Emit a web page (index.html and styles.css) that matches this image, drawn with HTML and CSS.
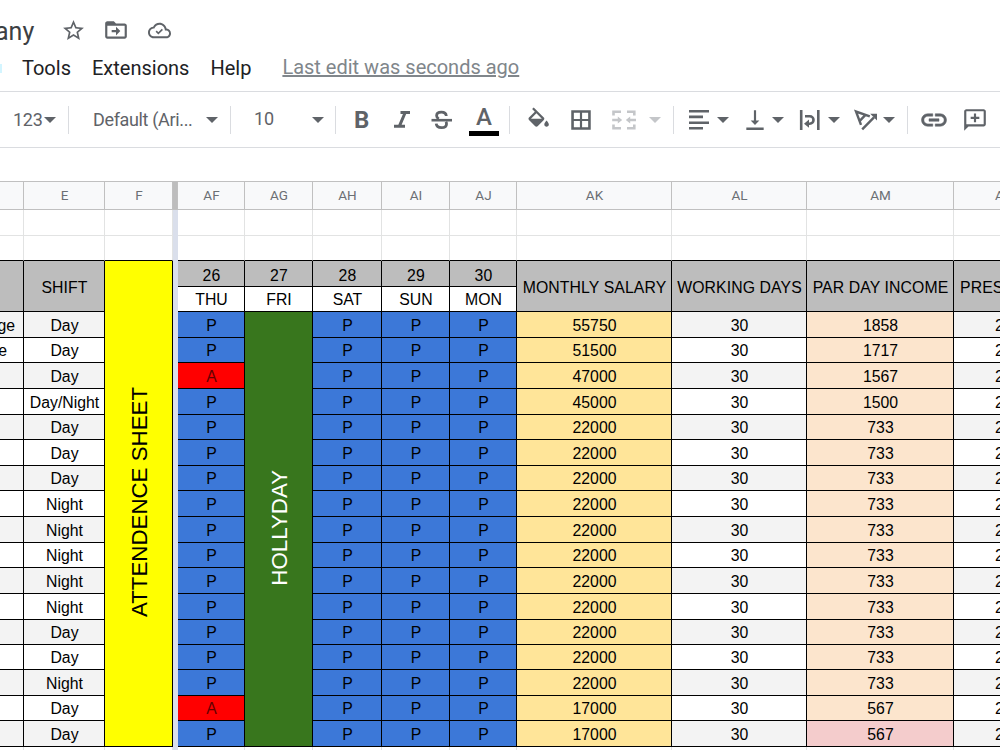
FILE: index.html
```
<!DOCTYPE html>
<html lang="en">
<head>
    <meta charset="UTF-8">
    <meta name="viewport" content="width=device-width, initial-scale=1.0">
    <title>Attendance Sheet</title>
    <link rel="stylesheet" href="styles.css">
</head>
<body>
<header>
    <div class="title-row">
        <span class="doc-title">any</span>
        <svg class="star" viewBox="0 0 24 24"><path d="M22 9.24l-7.19-.62L12 2 9.19 8.63 2 9.24l5.46 4.73L5.82 21 12 17.27 18.18 21l-1.63-7.03L22 9.24zM12 15.4l-3.76 2.27 1-4.28-3.32-2.88 4.38-.38L12 6.1l1.71 4.04 4.38.38-3.32 2.88 1 4.28L12 15.4z"/></svg>
        <svg class="move" viewBox="0 0 24 24"><path d="M20 6h-8l-2-2H4c-1.1 0-2 .9-2 2v12c0 1.1.9 2 2 2h16c1.1 0 2-.9 2-2V8c0-1.1-.9-2-2-2zm0 12H4V8h16zM12 17l4-4-4-4v3H8v2h4z"/></svg>
        <svg class="cloud" viewBox="0 0 24 24"><path d="M19.35 10.04C18.67 6.59 15.64 4 12 4 9.11 4 6.61 5.64 5.36 8.04 2.35 8.36 0 10.9 0 14c0 3.31 2.69 6 6 6h13c2.76 0 5-2.24 5-5 0-2.64-2.05-4.78-4.65-4.96zM19 18H6c-2.21 0-4-1.79-4-4 0-2.05 1.53-3.76 3.56-3.97l1.07-.11.5-.95C8.08 7.14 9.94 6 12 6c2.62 0 4.88 1.86 5.39 4.43l.3 1.5 1.53.11c1.56.1 2.78 1.41 2.78 2.96 0 1.65-1.35 3-3 3z"/><path d="M8.5 12.7l2.3 2.3 4.2-4.2" fill="none" stroke="#5f6368" stroke-width="1.7"/></svg>
    </div>
    <nav class="menu">
        <span class="menu-edge"></span>
        <span>Tools</span>
        <span>Extensions</span>
        <span>Help</span>
        <a class="last-edit">Last edit was seconds ago</a>
    </nav>
</header>

<div class="toolbar">
    <span class="format">123</span>
    <i class="caret"></i>
    <i class="sep"></i>
    <span class="font">Default (Ari...</span>
    <i class="caret"></i>
    <i class="sep"></i>
    <span class="size">10</span>
    <i class="caret"></i>
    <i class="sep"></i>
    <b class="bold">B</b>
    <svg viewBox="0 0 26 26" class="line"><path d="M12.5 5.5H22M6 19.2H17M17.2 5.5L11.4 19.2" stroke-width="3"/></svg>
    <svg viewBox="0 0 26 26" class="line"><path d="M18.3 9c-.2-2.4-2-3.8-4.9-3.8-2.8 0-4.8 1.4-4.8 3.6 0 1.5.8 2.4 2.2 3.1M8.2 16.6c.3 2.5 2.3 4 5.3 4s5-1.4 5-3.7c0-.9-.2-1.5-.6-2.1" stroke-width="2.8"/><path d="M3.5 13.2h20.5"/></svg>
    <span class="color">A</span>
    <i class="sep"></i>
    <svg viewBox=".8 -.4 23 23"><path d="M16.56 8.94L7.62 0 6.21 1.41l2.38 2.38-5.15 5.15c-.59.59-.59 1.54 0 2.12l5.5 5.5c.29.29.68.44 1.06.44s.77-.15 1.06-.44l5.5-5.5c.59-.58.59-1.53 0-2.12zM5.21 10L10 5.21 14.79 10H5.21zM19 11.5s-2 2.17-2 3.5c0 1.1.9 2 2 2s2-.9 2-2c0-1.33-2-3.5-2-3.5z"/></svg>
    <svg viewBox="0 0 24 24"><path d="M3 3v18h18V3H3zm8 15.6H5.4V13H11v5.6zm0-7.6H5.4V5.4H11V11zm7.6 7.6H13V13h5.6v5.6zm0-7.6H13V5.4h5.6V11z"/></svg>
    <svg viewBox="0 0 26 26" class="line off"><path d="M2.5 8.5V4.7H10M16 4.7h7.3v3.8M2.5 17.5v3.8H10M16 21.3h7.3v-3.8M1.2 13H8M25 13h-7"/><path d="M6.8 9.5l4.4 3.5-4.4 3.5zM19.2 9.5L14.8 13l4.4 3.5z" class="solid"/></svg>
    <i class="caret off"></i>
    <i class="sep"></i>
    <svg viewBox="0 0 26 26" class="line"><path d="M3 4.3h20M3 9.9h14M3 15.7h20M3 21.3h14"/></svg>
    <i class="caret"></i>
    <svg viewBox="0 0 24 24"><path d="M16 12.5h-3V3h-2v9.5H8l4 4 4-4zM4 19v2.2h16V19H4z"/></svg>
    <i class="caret"></i>
    <svg viewBox="0 0 26 26" class="line"><path d="M4.2 3v20M21.3 3v20M8 9.3h4.8a3.7 3.7 0 0 1 0 7.4H11"/><path d="M12 12.6v8.2l-5-4.1z" class="solid"/></svg>
    <i class="caret"></i>
    <svg viewBox="0 0 26 26" class="line"><path d="M16.8 9.3L3 4.5l5 13.3M12.5 7.8L7 13.6M9.2 22.3L21 10.3" stroke-width="2.4"/><path d="M24 6.8v6.8l-6.8-6.8z" class="solid"/></svg>
    <i class="caret"></i>
    <i class="sep"></i>
    <svg class="link" viewBox="0 0 24 24"><path d="M3.9 12c0-1.71 1.39-3.1 3.1-3.1h4V7H7c-2.76 0-5 2.24-5 5s2.24 5 5 5h4v-1.9H7c-1.71 0-3.1-1.39-3.1-3.1zM8 13h8v-2H8v2zm9-6h-4v1.9h4c1.71 0 3.1 1.39 3.1 3.1s-1.39 3.1-3.1 3.1h-4V17h4c2.76 0 5-2.24 5-5s-2.24-5-5-5z" stroke="#5f6368" stroke-width=".4"/></svg>
    <svg viewBox="0 0 24 24"><path d="M22 4c0-1.1-.9-2-2-2H4c-1.1 0-2 .9-2 2v18l4-4h14c1.1 0 2-.9 2-2V4zm-2 12H4V4h16v12zM13 14h-2v-3H8V9h3V6h2v3h3v2h-3z"/></svg>
</div>

<table class="sheet">
    <colgroup>
        <col class="w-d"><col class="w-e"><col class="w-f"><col class="w-freeze"><col class="w-af"><col class="w-ag"><col class="w-ah"><col class="w-ai"><col class="w-aj"><col class="w-ak"><col class="w-al"><col class="w-am"><col class="w-an">
    </colgroup>
    <tr class="letters"><th></th><th>E</th><th>F</th><th class="freeze"></th><th>AF</th><th>AG</th><th>AH</th><th>AI</th><th>AJ</th><th>AK</th><th>AL</th><th>AM</th><th>AN</th></tr>
    <tr class="blank"><td></td><td></td><td></td><td class="divider" rowspan="22"></td><td></td><td></td><td></td><td></td><td></td><td></td><td></td><td></td><td></td></tr>
    <tr class="blank last short"><td></td><td></td><td></td><td></td><td></td><td></td><td></td><td></td><td></td><td></td><td></td><td></td></tr>
    <tr class="head"><td rowspan="2"></td><td rowspan="2">SHIFT</td><td class="attendance" rowspan="19"><span>ATTENDENCE SHEET</span></td><td class="date">26</td><td class="date">27</td><td class="date">28</td><td class="date">29</td><td class="date">30</td><td rowspan="2">MONTHLY SALARY</td><td rowspan="2">WORKING DAYS</td><td rowspan="2">PAR DAY INCOME</td><td class="cut" rowspan="2">PRESENT</td></tr>
    <tr class="week short"><td>THU</td><td>FRI</td><td>SAT</td><td>SUN</td><td>MON</td></tr>
    <tr class="row alt"><td class="name">ge</td><td>Day</td><td class="p">P</td><td class="holiday" rowspan="17"><span>HOLLYDAY</span></td><td class="p">P</td><td class="p">P</td><td class="p">P</td><td>55750</td><td>30</td><td>1858</td><td>25</td></tr>
    <tr class="row short"><td class="name e">e</td><td>Day</td><td class="p">P</td><td class="p">P</td><td class="p">P</td><td class="p">P</td><td>51500</td><td>30</td><td>1717</td><td>25</td></tr>
    <tr class="row alt"><td></td><td>Day</td><td class="a">A</td><td class="p">P</td><td class="p">P</td><td class="p">P</td><td>47000</td><td>30</td><td>1567</td><td>25</td></tr>
    <tr class="row"><td></td><td>Day/Night</td><td class="p">P</td><td class="p">P</td><td class="p">P</td><td class="p">P</td><td>45000</td><td>30</td><td>1500</td><td>25</td></tr>
    <tr class="row alt short"><td></td><td>Day</td><td class="p">P</td><td class="p">P</td><td class="p">P</td><td class="p">P</td><td>22000</td><td>30</td><td>733</td><td>25</td></tr>
    <tr class="row"><td></td><td>Day</td><td class="p">P</td><td class="p">P</td><td class="p">P</td><td class="p">P</td><td>22000</td><td>30</td><td>733</td><td>25</td></tr>
    <tr class="row alt short"><td></td><td>Day</td><td class="p">P</td><td class="p">P</td><td class="p">P</td><td class="p">P</td><td>22000</td><td>30</td><td>733</td><td>25</td></tr>
    <tr class="row"><td></td><td>Night</td><td class="p">P</td><td class="p">P</td><td class="p">P</td><td class="p">P</td><td>22000</td><td>30</td><td>733</td><td>25</td></tr>
    <tr class="row alt"><td></td><td>Night</td><td class="p">P</td><td class="p">P</td><td class="p">P</td><td class="p">P</td><td>22000</td><td>30</td><td>733</td><td>25</td></tr>
    <tr class="row short"><td></td><td>Night</td><td class="p">P</td><td class="p">P</td><td class="p">P</td><td class="p">P</td><td>22000</td><td>30</td><td>733</td><td>25</td></tr>
    <tr class="row alt"><td></td><td>Night</td><td class="p">P</td><td class="p">P</td><td class="p">P</td><td class="p">P</td><td>22000</td><td>30</td><td>733</td><td>25</td></tr>
    <tr class="row"><td></td><td>Night</td><td class="p">P</td><td class="p">P</td><td class="p">P</td><td class="p">P</td><td>22000</td><td>30</td><td>733</td><td>25</td></tr>
    <tr class="row alt short"><td></td><td>Day</td><td class="p">P</td><td class="p">P</td><td class="p">P</td><td class="p">P</td><td>22000</td><td>30</td><td>733</td><td>25</td></tr>
    <tr class="row short"><td></td><td>Day</td><td class="p">P</td><td class="p">P</td><td class="p">P</td><td class="p">P</td><td>22000</td><td>30</td><td>733</td><td>25</td></tr>
    <tr class="row alt"><td></td><td>Night</td><td class="p">P</td><td class="p">P</td><td class="p">P</td><td class="p">P</td><td>22000</td><td>30</td><td>733</td><td>25</td></tr>
    <tr class="row short"><td></td><td>Day</td><td class="a">A</td><td class="p">P</td><td class="p">P</td><td class="p">P</td><td>17000</td><td>30</td><td>567</td><td>25</td></tr>
    <tr class="row alt"><td></td><td>Day</td><td class="p">P</td><td class="p">P</td><td class="p">P</td><td class="p">P</td><td>17000</td><td>30</td><td class="low">567</td><td>25</td></tr>
    <tr class="blank"><td></td><td></td><td></td><td></td><td></td><td></td><td></td><td></td><td></td><td></td><td></td><td></td></tr>
</table>
</body>
</html>
```
FILE: styles.css
```
html {
    height: 100%;
    overflow: hidden;
}
body {
    margin: 0;
    height: 100%;
    overflow: hidden;
    background-color: #fff;
    font-family: Roboto, Arial, sans-serif;
    color: #202124;
}
header {
    height: 91px;
    border-bottom: 1px solid #dadce0;
}
svg {
    display: block;
    width: 26px;
    height: 26px;
    fill: #5f6368;
    flex: none;
}

/* title and menu */
.title-row {
    display: flex;
    align-items: center;
    height: 54px;
    padding-top: 8px;
    box-sizing: border-box;
}
.doc-title {
    width: 36px;
    margin-left: -5px;
    font-size: 25px;
    color: #3c4043;
}
.title-row .star {
    width: 25px;
    height: 25px;
    margin: 0 0 2px 30px;
}
.title-row .move {
    margin: 0 0 3px 17px;
}
.title-row .cloud {
    width: 23px;
    height: 23px;
    margin: 0 0 2px 19px;
}
.menu {
    display: flex;
    align-items: center;
    height: 28px;
    font-size: 20px;
}
.menu span + span {
    margin-right: 21px;
}
.menu .menu-edge {
    width: 2px;
    height: 9px;
    margin-right: 20px;
    background-color: #d3f5ff;
}
.last-edit {
    margin-left: 10px;
    padding-bottom: 2px;
    color: #80868b;
    text-decoration: underline;
}

/* toolbar */
.toolbar {
    display: grid;
    grid-template-columns: 31px 25px 24px 113px 25px 23px 58px 24px 12px 40px 40px 41px 41px 16px 42px 43px 38px 25px 12px 31px 25px 30px 25px 31px 25px 30px 25px 11px 43px 26px;
    align-items: center;
    height: 55px;
    padding-left: 13px;
    border-bottom: 1px solid #dadce0;
    font-size: 18px;
    color: #5f6368;
    white-space: nowrap;
}
.toolbar .font {
    letter-spacing: -0.35px;
}
.toolbar .size {
    padding-bottom: 3px;
}
.toolbar .format {
    letter-spacing: -0.3px;
}
.caret {
    width: 0;
    border: 6px solid transparent;
    border-top-color: #5f6368;
    border-bottom: 0;
}
.caret.off {
    border-top-color: #c4c6c9;
}
.sep {
    width: 1px;
    height: 28px;
    margin-left: -1px;
    background-color: #dadce0;
}
.line {
    fill: none;
    stroke: #5f6368;
    stroke-width: 2.6;
}
.line.off {
    stroke: #c4c6c9;
}
.line .solid {
    fill: #5f6368;
    stroke: none;
}
.line.off .solid {
    fill: #c4c6c9;
}
.bold {
    padding-left: 6px;
    font-size: 24px;
}
.color {
    width: 30px;
    height: 28px;
    margin-top: 4px;
    border-bottom: 5px solid #000;
    box-sizing: border-box;
    font-size: 24px;
    font-weight: 500;
    line-height: 19px;
    text-align: center;
}
.toolbar .link {
    width: 30px;
    height: 30px;
}

/* sheet */
.sheet {
    width: 1000px;
    margin-top: 33px;
    border-top: 1px solid #c0c0c0;
    border-spacing: 0;
    table-layout: fixed;
    font-family: "Liberation Sans", Arial, sans-serif;
    font-size: 15.8px;
    color: #000;
}
.w-d { width: 24px; }
.w-e { width: 81px; }
.w-f { width: 68px; }
.w-freeze { width: 5px; }
.w-af { width: 67px; }
.w-ag { width: 68px; }
.w-ah { width: 69px; }
.w-ai { width: 68px; }
.w-aj { width: 67px; }
.w-ak { width: 155px; }
.w-al { width: 135px; }
.w-am { width: 147px; }
.w-an { width: 46px; }
.sheet tr {
    height: 26px;
}
.sheet tr.short {
    height: 25px;
}
.sheet tr.letters {
    height: 28px;
}
.sheet td, .sheet th {
    padding: 2px 0 0 1px;
    border-right: 1px solid #000;
    border-bottom: 1px solid #000;
    line-height: 20px;
    text-align: center;
    white-space: nowrap;
    overflow: hidden;
}
.sheet th {
    padding-top: 0;
    padding-bottom: 1px;
    border-color: #c0c0c0;
    background-color: #f8f9fa;
    font-family: Roboto, Arial, sans-serif;
    font-size: 13.5px;
    font-weight: 400;
    color: #6b6f74;
}
.sheet th.freeze {
    background-color: #bdbdbd;
}
.sheet .row td:last-child, .sheet th:last-child {
    padding-left: 41px;
    text-align: left;
}
.sheet .blank td {
    border-color: #e2e3e3;
}
.sheet .blank.last td {
    border-bottom-color: #000;
}
.sheet .blank .divider {
    border: 0;
    background-color: #dadfeb;
}
.sheet .head td {
    padding-top: 3px;
    background-color: #bdbdbd;
    letter-spacing: 0.1px;
}
.sheet .head .date {
    padding-top: 4px;
    line-height: 18px;
}
.sheet .head .cut {
    padding-left: 6px;
    text-align: left;
}
.sheet tr:not(.week) > :last-child {
    border-right: 0;
}
.alt td {
    background-color: #f3f3f3;
}
.sheet .name {
    padding-right: 9px;
    text-align: right;
    direction: rtl;
}
.sheet .name.e {
    padding-right: 17px;
}
.row td:nth-last-child(4) {
    background-color: #ffe599;
}
.row td:nth-last-child(2) {
    background-color: #fce5cd;
}
.row td.low {
    background-color: #f4cccc;
}
.row .p {
    background-color: #3c78d8;
}
.row .a {
    background-color: #f00;
    color: #600;
}
.sheet .head .attendance {
    padding: 3px 0 0 3px;
    background-color: #ff0;
    letter-spacing: 0;
}
.sheet .row .holiday {
    padding: 2px 0 0 3px;
    background-color: #38761d;
    color: #fff;
}
.attendance span, .holiday span {
    display: inline-block;
    writing-mode: vertical-rl;
    transform: rotate(180deg);
    font-size: 22.3px;
}
```
